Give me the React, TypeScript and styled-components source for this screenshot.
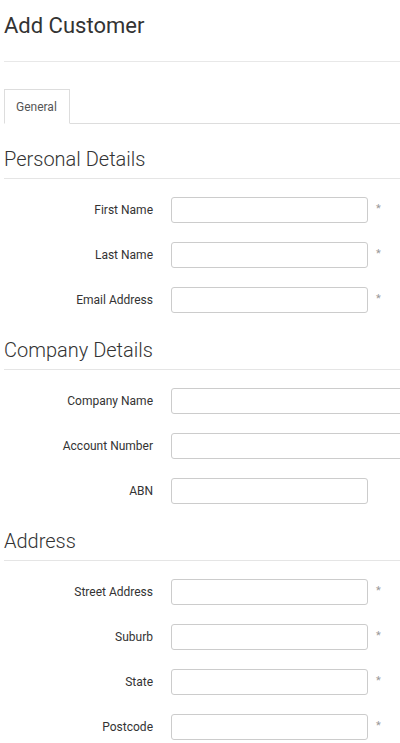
import React from 'react';
import styled, { createGlobalStyle } from 'styled-components';

const GlobalStyle = createGlobalStyle`
  html, body {
    margin: 0;
    padding: 0;
    background: #fff;
    overflow-x: hidden;
  }
  body {
    font-family: Roboto, "Liberation Sans", Arial, sans-serif;
    color: #333;
  }
`;

/*** PAGE ***/
const Page = styled.div`
  padding: 13px 0 0 4px;
  width: 396px;
  overflow: hidden;
`;

const Title = styled.h1`
  margin: 0;
  font-size: 22px;
  line-height: 26px;
  font-weight: 400;
  color: #333;
`;

const Divider = styled.hr`
  margin: 22px 0 0;
  border: none;
  border-top: 1px solid #e8e8e8;
  height: 0;
`;

/*** TABS ***/
const TabBar = styled.div`
  display: flex;
  margin-top: 27px;
  border-bottom: 1px solid #ddd;
`;

const Tab = styled.div<{ active?: boolean }>`
  font-size: 12px;
  line-height: 16px;
  padding: 9px 12px 8px 11px;
  color: #555;
  background: #fff;
  border: 1px solid ${(p) => (p.active ? '#ddd' : 'transparent')};
  border-bottom-color: transparent;
  margin-bottom: -1px;
`;

/*** SECTIONS ***/
const SectionTitle = styled.h2<{ first?: boolean }>`
  margin: ${(p) => (p.first ? '23px' : '25px')} 0 0;
  padding-bottom: 7px;
  font-size: 20px;
  line-height: 24px;
  font-weight: 300;
  color: #333;
  border-bottom: 1px solid #e5e5e5;
`;

const Fields = styled.div`
  display: flex;
  flex-direction: column;
  gap: 19px;
  padding-top: 18px;
`;

const Row = styled.div`
  display: flex;
  align-items: center;
  height: 26px;
`;

const Label = styled.label`
  width: 149px;
  flex: none;
  text-align: right;
  font-size: 12px;
  color: #333;
  margin-right: 18px;
`;

const Input = styled.input<{ wide?: boolean }>`
  box-sizing: border-box;
  flex: none;
  width: ${(p) => (p.wide ? '260px' : '197px')};
  height: 26px;
  border: 1px solid #ccc;
  border-radius: 3px;
  background: #fff;
  font-family: inherit;
  font-size: 12px;
  padding: 0 6px;
  outline: none;
`;

const Required = styled.span`
  margin-left: 8px;
  font-size: 11px;
  color: #999;
  position: relative;
  top: -2px;
`;

type Field = { label: string; required?: boolean; wide?: boolean };

const sections: { title: string; fields: Field[] }[] = [
  {
    title: 'Personal Details',
    fields: [
      { label: 'First Name', required: true },
      { label: 'Last Name', required: true },
      { label: 'Email Address', required: true },
    ],
  },
  {
    title: 'Company Details',
    fields: [
      { label: 'Company Name', wide: true },
      { label: 'Account Number', wide: true },
      { label: 'ABN' },
    ],
  },
  {
    title: 'Address',
    fields: [
      { label: 'Street Address', required: true },
      { label: 'Suburb', required: true },
      { label: 'State', required: true },
      { label: 'Postcode', required: true },
    ],
  },
];

export default function App() {
  return (
    <>
      <GlobalStyle />
      <Page>
        <Title>Add Customer</Title>
        <Divider />
        <TabBar>
          <Tab active>General</Tab>
        </TabBar>
        {sections.map((s, i) => (
          <section key={s.title}>
            <SectionTitle first={i === 0}>{s.title}</SectionTitle>
            <Fields>
              {s.fields.map((f) => (
                <Row key={f.label}>
                  <Label>{f.label}</Label>
                  <Input wide={f.wide} />
                  {f.required && <Required>*</Required>}
                </Row>
              ))}
            </Fields>
          </section>
        ))}
      </Page>
    </>
  );
}
